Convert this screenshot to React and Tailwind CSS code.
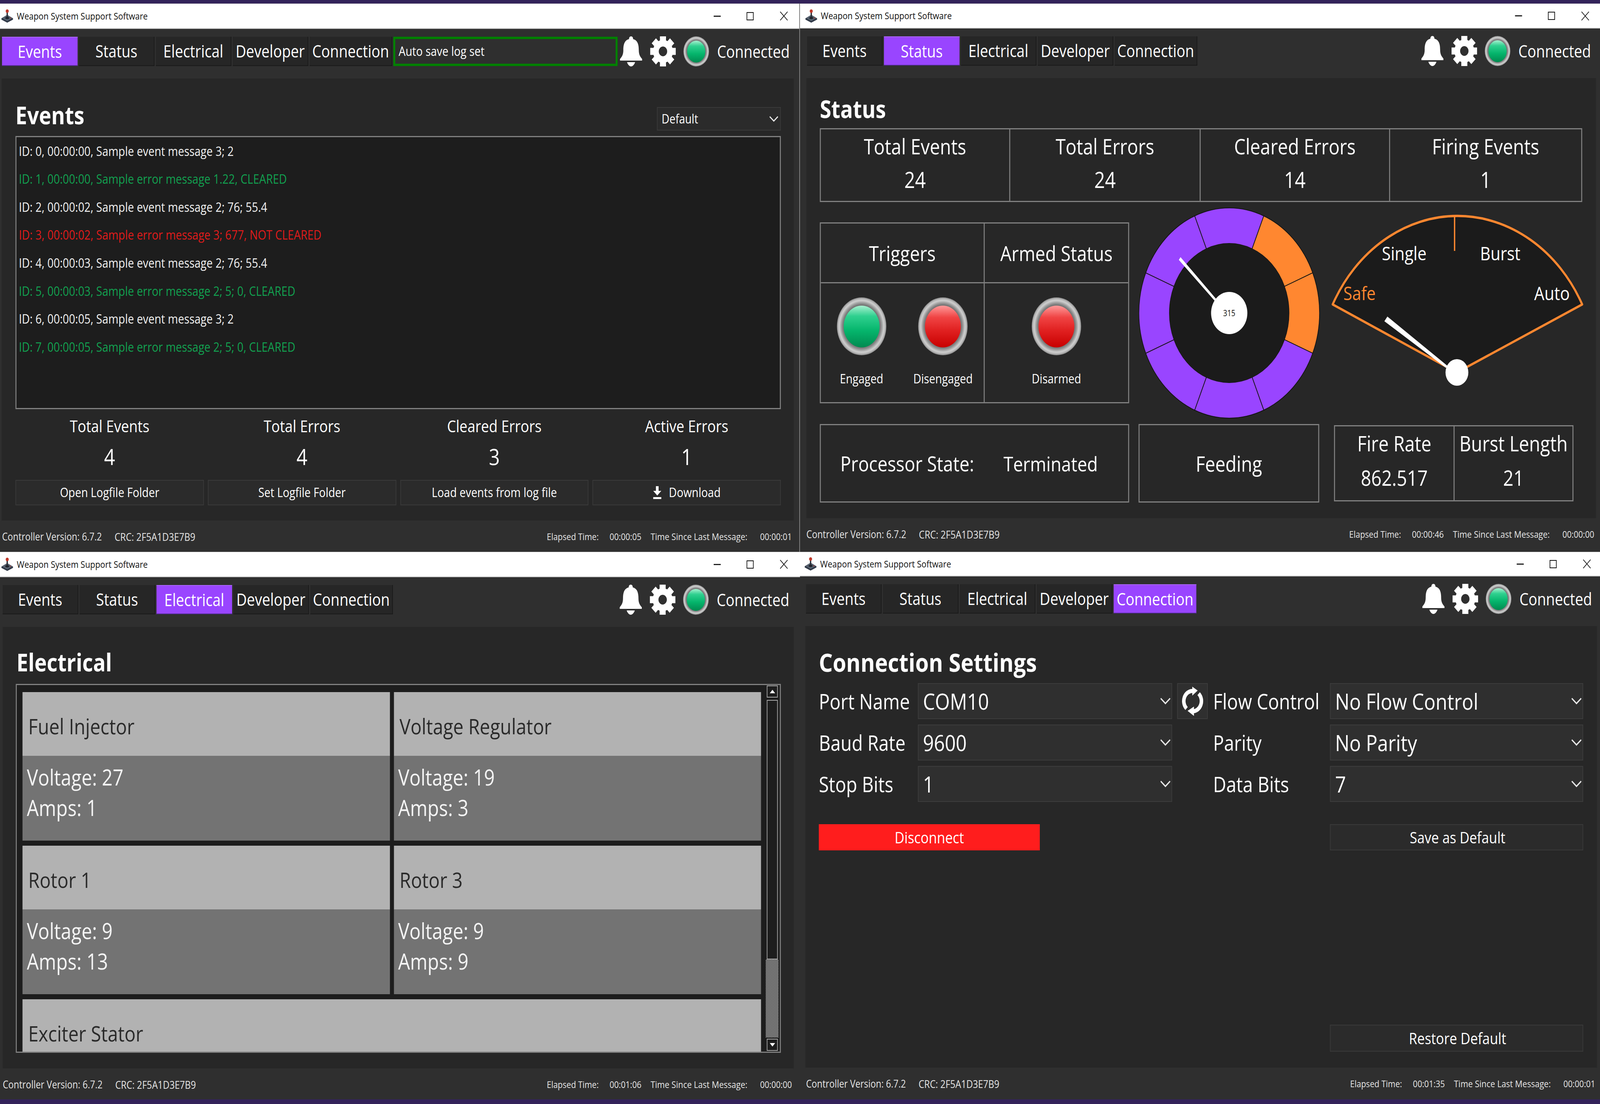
import React from "react";

const TABS = ["Events", "Status", "Electrical", "Developer", "Connection"];

const PURPLE = "#9945ff";
const ORANGE = "#ff8730";

const Joystick = () => (
  <svg width="35" height="34" viewBox="0 0 35 34" className="shrink-0">
    <path d="M17.5 14 L35 23 L35 26 L17.5 34 L0 26 L0 23 Z" fill="#2f3846" />
    <path d="M17.5 14 L33 22.5 L17.5 30 L2 22.5 Z" fill="#56616f" />
    <rect x="15.5" y="5" width="4" height="17" fill="#2b2f38" />
    <ellipse cx="17.5" cy="22" rx="6" ry="3" fill="#20242c" />
    <circle cx="17.5" cy="4.5" r="4.5" fill="#c0392b" />
    <circle cx="27" cy="22" r="1.6" fill="#b03a32" />
  </svg>
);

const Bell = () => (
  <svg width="66" height="77" viewBox="0 0 66 77" fill="#ffffff" className="shrink-0">
    <path d="M33 0c4 0 6 3 6 7c14 3 17 15 17 28c0 12 4 17 10 23v4H0v-4c6-6 10-11 10-23c0-13 3-25 17-28c0-4 2-7 6-7z" />
    <path d="M21 66h24c-2 6-7 11-12 11s-10-5-12-11z" />
  </svg>
);

const Gear = () => (
  <svg width="76" height="77" viewBox="0 0 76 77" fill="#ffffff" className="shrink-0">
    {[0, 45, 90, 135, 180, 225, 270, 315].map((a) => (
      <rect key={a} x="29" y="0" width="18" height="18" transform={`rotate(${a} 38 38.5)`} />
    ))}
    <circle cx="38" cy="38.5" r="21" fill="none" stroke="#ffffff" strokeWidth="17" />
  </svg>
);

const Refresh = () => (
  <svg width="64" height="76" viewBox="0 0 64 76" fill="#ffffff">
    <path d="M14 57A26 26 0 0 1 32 12" fill="none" stroke="#ffffff" strokeWidth="10.5" />
    <path d="M50 19A26 26 0 0 1 32 64" fill="none" stroke="#ffffff" strokeWidth="10.5" />
    <path d="M31 1L47 11L31 24Z" />
    <path d="M36 52L17 63L36 76Z" />
  </svg>
);

const Chevron = ({ big }) => (
  <svg width={big ? 30 : 26} height={big ? 18 : 17} viewBox="0 0 30 18" fill="none" stroke="#e8e8e8" strokeWidth="3.5" className="shrink-0">
    <path d="M1 2L15 15L29 2" />
  </svg>
);

const Led = ({ color, small }) => (
  <div
    className={`${small ? "w-[76px] h-[77px]" : "w-[147px] h-[148px]"} shrink-0 rounded-full flex items-center justify-center bg-[radial-gradient(circle_closest-side,#6e6e6e_72%,#8c8c8c_79%,#cfcfcf_90%,#b4b4b4_96%,#8e8e8e_100%)]`}
  >
    <div
      className={`${small ? "w-[54px] h-[56px]" : "w-[107px] h-[107px]"} rounded-full ${
        color === "green"
          ? "bg-[linear-gradient(180deg,#a8f0d0_0%,#2fd08f_25%,#05b56c_60%,#008a50_100%)]"
          : "bg-[linear-gradient(180deg,#ff9a9a_0%,#f04444_28%,#e02020_60%,#c80000_100%)]"
      }`}
    />
  </div>
);

const RoundGauge = () => {
  const cx = 270;
  const cy = 270;
  const R = 269;
  const r = 178;
  const pt = (rad, deg) => {
    const a = ((deg - 90) * Math.PI) / 180;
    return `${cx + rad * Math.cos(a)} ${cy + rad * Math.sin(a)}`;
  };
  const segs = [
    [-22.5, PURPLE],
    [22.5, ORANGE],
    [67.5, ORANGE],
    [112.5, PURPLE],
    [157.5, PURPLE],
    [202.5, PURPLE],
    [247.5, PURPLE],
    [292.5, PURPLE],
  ];
  return (
    <svg width="540" height="540" viewBox="0 0 540 540" className="shrink-0">
      {segs.map(([start, fill]) => (
        <path
          key={start}
          d={`M${pt(r, start)}L${pt(R, start)}A${R} ${R} 0 0 1 ${pt(R, start + 45)}L${pt(r, start + 45)}A${r} ${r} 0 0 0 ${pt(r, start)}Z`}
          fill={fill}
          stroke="#141414"
          strokeWidth="2"
        />
      ))}
      <circle cx={cx} cy={cy} r={r} fill="#1b1b1b" />
      <path d="M120 134L125 127L233 236L228 240Z" fill="#ffffff" />
      <circle cx={cx} cy={cy} r="54" fill="#ffffff" />
      <text x={cx} y={cy} textAnchor="middle" dominantBaseline="central" fontSize="21" fill="#111111">
        315
      </text>
    </svg>
  );
};

const FanGauge = () => (
  <svg width="760" height="450" viewBox="0 0 760 450" className="shrink-0 mt-[14px] ml-[31px]">
    <path
      d="M7 234A418 418 0 0 1 750 234L377 408Z"
      fill="#1b1b1b"
      stroke={ORANGE}
      strokeWidth="6"
      strokeLinejoin="round"
    />
    <path d="M370 8V97" stroke={ORANGE} strokeWidth="4" />
    <g fontSize="48" textAnchor="middle" dominantBaseline="central" fill="#ffffff">
      <text x="220" y="102">Single</text>
      <text x="506" y="102">Burst</text>
      <text x="87" y="204" fill={ORANGE}>Safe</text>
      <text x="660" y="204">Auto</text>
    </g>
    <path d="M161 277L170 265L350 392L344 396Z" fill="#ffffff" />
    <circle cx="377" cy="408" r="34" fill="#ffffff" />
  </svg>
);

// ventana con barra de titulo, tabs, panel y pie
const Win = ({ cfg, tab, toast, children, border }) => (
  <div className={`flex flex-col h-full overflow-hidden bg-[#2f2f2f] text-white ${border ? "border-r-2 border-[#8a8a8a]" : ""}`}>
    <div
      className="flex items-center shrink-0 bg-white border-t border-b-2 border-[#c8c8c8] text-[#111111]"
      style={{ height: cfg.title, paddingLeft: cfg.iconX, paddingRight: cfg.capR }}
    >
      <Joystick />
      <span className="ml-[11px] text-[24.5px] leading-none">Weapon System Support Software</span>
      <div className="ml-auto flex items-center">
        <div className="w-[21px] h-[3px] bg-[#222222]" />
        <div className="ml-[77px] w-[21px] h-[21px] border-2 border-[#111111]" />
        <svg width="24" height="24" viewBox="0 0 24 24" stroke="#222222" strokeWidth="2" className="ml-[78px]">
          <path d="M1 1L23 23M23 1L1 23" />
        </svg>
      </div>
    </div>

    {/* Tabs */}
    <div
      className="flex items-start shrink-0 h-[127px] pt-[20px]"
      style={{ paddingLeft: cfg.tabX, paddingRight: cfg.clusterR }}
    >
      <div className="flex gap-[4px] shrink-0">
        {TABS.map((t) => (
          <div
            key={t}
            className={`${t === "Connection" ? "w-[246px]" : "w-[225px]"} h-[75px] flex items-center justify-center text-[43px] leading-none ${
              t === tab
                ? "bg-[#9945ff] border-t-2 border-[#ab66ff] border-b-2 border-b-[#4b2a85]"
                : "bg-[#262626] border-b-2 border-r-2 border-[#1a1a1a]"
            }`}
          >
            {t}
          </div>
        ))}
      </div>
      {toast && (
        <div className="ml-[3px] w-[668px] h-[75px] flex items-center pl-[10px] border-[6px] border-[#008000] text-[32.5px] leading-none">
          {toast}
        </div>
      )}
      <div className="ml-auto flex items-center h-[77px] -mt-[1px]">
        <Bell />
        <div className="ml-[24px]">
          <Gear />
        </div>
        <div className="ml-[23px]">
          <Led color="green" small />
        </div>
        <span className="ml-[24px] w-[220px] text-[43px] leading-none">Connected</span>
      </div>
    </div>

    {/* Panel */}
    <div
      className="shrink-0 bg-[#272727] overflow-hidden"
      style={{ marginLeft: cfg.panelL, marginRight: cfg.panelR, height: cfg.panelH }}
    >
      {children}
    </div>

    {/* Pie */}
    <div
      className="flex items-center shrink-0 h-[82px] text-[26.5px] leading-none text-[#e6e6e6] whitespace-nowrap"
      style={{ paddingLeft: cfg.footX }}
    >
      <span className="w-[335px]">Controller Version: 6.7.2</span>
      <span className="text-[27px]" style={{ width: cfg.footGap }}>CRC: 2F5A1D3E7B9</span>
      <span className="w-[187px] text-[24px]">Elapsed Time:</span>
      <span className="w-[122px] text-[24px]">{cfg.elapsed}</span>
      <span className="w-[326px] text-[24.5px]">Time Since Last Message:</span>
      <span className="text-[24px]">{cfg.last}</span>
    </div>
  </div>
);

const EVENTS = [
  ["ID: 0, 00:00:00, Sample event message 3; 2", "text-[#f2f2f2]"],
  ["ID: 1, 00:00:00, Sample error message 1.22, CLEARED", "text-[#12a150]"],
  ["ID: 2, 00:00:02, Sample event message 2; 76; 55.4", "text-[#f2f2f2]"],
  ["ID: 3, 00:00:02, Sample error message 3; 677, NOT CLEARED", "text-[#e01b1b]"],
  ["ID: 4, 00:00:03, Sample event message 2; 76; 55.4", "text-[#f2f2f2]"],
  ["ID: 5, 00:00:03, Sample error message 2; 5; 0, CLEARED", "text-[#12a150]"],
  ["ID: 6, 00:00:05, Sample event message 3; 2", "text-[#f2f2f2]"],
  ["ID: 7, 00:00:05, Sample error message 2; 5; 0, CLEARED", "text-[#12a150]"],
];

const FlatButton = ({ children, className = "h-[65px] text-[32.5px]" }) => (
  <div className={`flex items-center justify-center bg-[#2b2b2b] border-2 border-[#3a3a3a] leading-none ${className}`}>
    {children}
  </div>
);

const EventsPanel = () => (
  <div className="pl-[41px] pt-[73px] w-[2320px]">
    <div className="flex items-start justify-between h-[60px]">
      <span className="text-[62px] font-bold leading-none -mt-[11px]">Events</span>
      <div className="w-[369px] h-[60px] flex items-center justify-between pl-[12px] pr-[6px] bg-[#2b2b2b] border-2 border-[#3a3a3a] text-[32px] leading-none">
        Default
        <Chevron />
      </div>
    </div>
    <div className="mt-[14px] h-[699px] pl-[7px] bg-[#1d1d1d] border-[3px] border-[#808080]">
      {EVENTS.map(([text, color]) => (
        <div key={text} className={`h-[71.6px] flex items-center text-[32.5px] leading-none ${color}`}>
          {text}
        </div>
      ))}
    </div>
    <div className="grid grid-cols-4 gap-x-[12px] mt-[12px] text-center">
      {[
        ["Total Events", "4"],
        ["Total Errors", "4"],
        ["Cleared Errors", "3"],
        ["Active Errors", "1"],
      ].map(([label, value]) => (
        <div key={label}>
          <div className="h-[62px] flex items-center justify-center text-[42px] leading-none">{label}</div>
          <div className="mt-[8px] h-[78px] flex items-center justify-center text-[57px] leading-none">{value}</div>
        </div>
      ))}
    </div>
    <div className="grid grid-cols-4 gap-x-[12px] mt-[21px]">
      <FlatButton>Open Logfile Folder</FlatButton>
      <FlatButton>Set Logfile Folder</FlatButton>
      <FlatButton>Load events from log file</FlatButton>
      <FlatButton>
        <svg width="26" height="34" viewBox="0 0 26 34" fill="#ffffff" className="mr-[22px]">
          <path d="M9 0H17V12H25L13 24L1 12H9Z" />
          <rect x="1" y="28" width="24" height="5" />
        </svg>
        Download
      </FlatButton>
    </div>
  </div>
);

const StatCell = ({ label, value, last }) => (
  <div className={`flex flex-col items-center ${last ? "" : "border-r-[3px] border-[#808080]"}`}>
    <div className="h-[86px] flex items-center text-[54px] leading-none">{label}</div>
    <div className="h-[84px] flex items-center text-[56px] leading-none">{value}</div>
  </div>
);

const StatusPanel = () => (
  <div className="pl-[40px] pt-[50px] w-[2330px]">
    <div className="h-[56px] flex items-center text-[62px] font-bold leading-none">Status</div>
    <div className="mt-[22px] w-[2270px] h-[189px] grid grid-cols-[564px_567px_564px_1fr] border-[3px] border-[#808080]">
      <StatCell label="Total Events" value="24" />
      <StatCell label="Total Errors" value="24" />
      <StatCell label="Cleared Errors" value="14" />
      <StatCell label="Firing Events" value="1" last />
    </div>

    <div className="flex items-start mt-[14px] h-[540px]">
      <div className="mt-[38px] w-[921px] h-[463px] shrink-0 grid grid-cols-[488px_1fr] grid-rows-[153px_1fr] border-[3px] border-[#808080]">
        <div className="flex items-center justify-center text-[53px] leading-none border-r-[3px] border-b-[3px] border-[#808080]">Triggers</div>
        <div className="flex items-center justify-center text-[53px] leading-none border-b-[3px] border-[#808080]">Armed Status</div>
        <div className="grid grid-cols-2 border-r-[3px] border-[#808080]">
          <div className="flex flex-col items-center pt-[36px]">
            <Led color="green" />
            <span className="mt-[44px] text-[32.5px] leading-none">Engaged</span>
          </div>
          <div className="flex flex-col items-center pt-[36px]">
            <Led color="red" />
            <span className="mt-[44px] text-[32.5px] leading-none">Disengaged</span>
          </div>
        </div>
        <div className="flex flex-col items-center pt-[36px]">
          <Led color="red" />
          <span className="mt-[44px] text-[32.5px] leading-none">Disarmed</span>
        </div>
      </div>
      <div className="ml-[28px]">
        <RoundGauge />
      </div>
      <FanGauge />
    </div>

    <div className="flex items-start mt-[14px]">
      <div className="w-[921px] h-[201px] shrink-0 flex items-center pl-[58px] border-[3px] border-[#808080] text-[53px] leading-none">
        <span className="w-[486px]">Processor State:</span>
        <span className="text-[52px]">Terminated</span>
      </div>
      <div className="ml-[28px] w-[538px] h-[201px] shrink-0 flex items-center justify-center border-[3px] border-[#808080] text-[54px] leading-none">
        Feeding
      </div>
      <div className="ml-[44px] mt-[3px] w-[713px] h-[195px] shrink-0 grid grid-cols-[356px_1fr] border-[3px] border-[#808080]">
        <div className="flex flex-col items-center border-r-[3px] border-[#808080]">
          <div className="h-[86px] flex items-center text-[54px] leading-none">Fire Rate</div>
          <div className="h-[90px] flex items-center text-[54px] leading-none">862.517</div>
        </div>
        <div className="flex flex-col items-center">
          <div className="h-[86px] flex items-center text-[54px] leading-none">Burst Length</div>
          <div className="h-[90px] flex items-center text-[54px] leading-none">21</div>
        </div>
      </div>
    </div>
  </div>
);

const Card = ({ name, voltage, amps }) => (
  <div>
    <div className="h-[163px] pl-[17px] pt-[10px] flex items-center bg-[#b2b2b2] text-[#2a2a2a] text-[55px] leading-none">{name}</div>
    <div className="h-[217px] pl-[13px] pt-[15px] bg-[#737373] text-[#f4f4f4] text-[56px] leading-[78px]">
      <div>Voltage: {voltage}</div>
      <div>Amps: {amps}</div>
    </div>
  </div>
);

const ScrollBtn = ({ up }) => (
  <div className="w-[33px] h-[31px] flex items-center justify-center bg-[#1d1d1d] border-2 border-[#a8a8a8]">
    <div
      className={
        up
          ? "w-0 h-0 border-l-[8px] border-r-[8px] border-b-[9px] border-l-transparent border-r-transparent border-b-white"
          : "w-0 h-0 border-l-[8px] border-r-[8px] border-t-[9px] border-l-transparent border-r-transparent border-t-white"
      }
    />
  </div>
);

const ElectricalPanel = () => (
  <div className="pl-[39px] pt-[60px] w-[2320px]">
    <div className="h-[60px] pl-[2px] flex items-center text-[62px] font-bold leading-none">Electrical</div>
    <div className="mt-[26px] w-[2278px] h-[944px] flex bg-[#1d1d1d] border-[3px] border-[#808080] overflow-hidden">
      <div className="w-[2216px] shrink-0 pl-[17px] pt-[18px]">
        <div className="grid grid-cols-2 gap-x-[12px] gap-y-[13px]">
          <Card name="Fuel Injector" voltage="27" amps="1" />
          <Card name="Voltage Regulator" voltage="19" amps="3" />
          <Card name="Rotor 1" voltage="9" amps="13" />
          <Card name="Rotor 3" voltage="9" amps="9" />
          <div className="col-span-2 h-[163px] pl-[17px] pt-[10px] flex items-center bg-[#b2b2b2] text-[#2a2a2a] text-[55px] leading-none">
            Exciter Stator
          </div>
        </div>
      </div>
      <div className="pl-[17px] pt-[1px] flex flex-col items-start">
        <ScrollBtn up />
        <div className="mt-[6px] w-[33px] h-[664px] bg-[#1d1d1d] border-2 border-[#a8a8a8]" />
        <div className="-ml-[3px] w-[38px] h-[200px] bg-[repeating-conic-gradient(#b8b8b8_0_25%,#2c2c2c_0_50%)] bg-[length:4px_4px]" />
        <div className="mt-[3px]">
          <ScrollBtn />
        </div>
      </div>
    </div>
  </div>
);

const Combo = ({ value }) => (
  <div className="h-[92px] flex items-center justify-between pl-[13px] pr-[3px] bg-[#2f2f2f] border-2 border-[#3c3c3c] text-[57px] leading-none">
    {value}
    <Chevron big />
  </div>
);

const ConnectionPanel = () => (
  <div className="pl-[40px] pt-[62px] pr-[41px]">
    <div className="h-[60px] flex items-center text-[65px] font-bold leading-none">Connection Settings</div>
    <div className="mt-[24px] grid grid-cols-[295px_757px_122px_348px_754px] gap-y-[14px] text-[54px] leading-none">
      <div className="flex items-center">Port Name</div>
      <Combo value="COM10" />
      <div className="pl-[15px]">
        <div className="w-[91px] h-[92px] flex items-center justify-center bg-[#2f2f2f] border-2 border-[#3c3c3c]">
          <Refresh />
        </div>
      </div>
      <div className="flex items-center">Flow Control</div>
      <Combo value="No Flow Control" />

      <div className="flex items-center">Baud Rate</div>
      <Combo value="9600" />
      <div />
      <div className="flex items-center">Parity</div>
      <Combo value="No Parity" />

      <div className="flex items-center">Stop Bits</div>
      <Combo value="1" />
      <div />
      <div className="flex items-center">Data Bits</div>
      <Combo value="7" />
    </div>
    <div className="mt-[57px] flex justify-between items-start">
      <div className="w-[658px] h-[67px] flex items-center justify-center bg-[#ff1d1d] text-[40px] leading-none">Disconnect</div>
      <FlatButton className="w-[754px] h-[67px] pl-[6px] text-[40px]">Save as Default</FlatButton>
    </div>
    <div className="mt-[446px] flex justify-end">
      <FlatButton className="w-[754px] h-[69px] pl-[6px] text-[40px]">Restore Default</FlatButton>
    </div>
  </div>
);

export default function App() {
  return (
    <div className="w-[4764px] h-[2825px] overflow-hidden bg-[#33235a] pt-[9px] origin-top-left scale-x-[0.85978] font-['Open_Sans',sans-serif]">
      <div className="grid grid-cols-[2382px_2382px] grid-rows-[1403px_1401px]">
        <Win
          border
          tab="Events"
          toast="Auto save log set"
          cfg={{ title: 65, iconX: 4, capR: 34, tabX: 6, clusterR: 25, panelL: 5, panelR: 17, panelH: 1131, footX: 6, footGap: 1287, elapsed: "00:00:05", last: "00:00:01" }}
        >
          <EventsPanel />
        </Win>
        <Win
          tab="Status"
          cfg={{ title: 64, iconX: 16, capR: 32, tabX: 21, clusterR: 23, panelL: 19, panelR: 12, panelH: 1126, footX: 19, footGap: 1281, elapsed: "00:00:46", last: "00:00:00" }}
        >
          <StatusPanel />
        </Win>
        <Win
          tab="Electrical"
          cfg={{ title: 65, iconX: 4, capR: 36, tabX: 8, clusterR: 28, panelL: 8, panelR: 19, panelH: 1130, footX: 8, footGap: 1285, elapsed: "00:01:06", last: "00:00:00" }}
        >
          <ElectricalPanel />
        </Win>
        <Win
          tab="Connection"
          cfg={{ title: 63, iconX: 14, capR: 27, tabX: 18, clusterR: 20, panelL: 16, panelR: 9, panelH: 1130, footX: 18, footGap: 1285, elapsed: "00:01:35", last: "00:00:01" }}
        >
          <ConnectionPanel />
        </Win>
      </div>
    </div>
  );
}
